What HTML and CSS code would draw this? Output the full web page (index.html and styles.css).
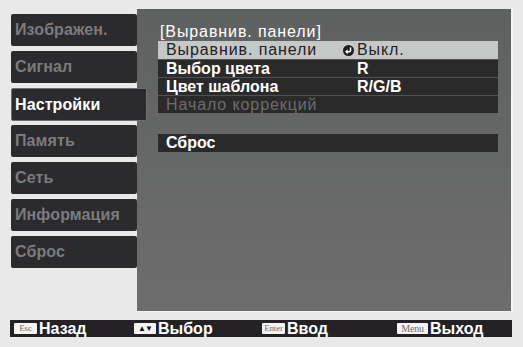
FILE: index.html
```html
<!DOCTYPE html>
<html lang="ru">
<head>
  <meta charset="UTF-8">
  <title>Настройки</title>
  <link rel="stylesheet" href="styles.css">
</head>
<body>
  <div class="screen">
    <div class="top">
      <ul class="tabs">
        <li class="tab">Изображен.</li>
        <li class="tab">Сигнал</li>
        <li class="tab active">Настройки</li>
        <li class="tab">Память</li>
        <li class="tab">Сеть</li>
        <li class="tab">Информация</li>
        <li class="tab">Сброс</li>
      </ul>

      <div class="panel">
        <div class="panel-title">[Выравнив. панели]</div>
        <div class="rows">
          <div class="row selected">
            <span class="label">Выравнив. панели</span>
            <span class="value">
              <svg class="enter-icon" viewBox="0 0 12 12" width="11" height="11">
                <circle cx="6" cy="6" r="6" fill="#1e1e1e"/>
                <path d="M8.2 2.6 V6 Q8.2 7.4 6.8 7.4 H4" fill="none" stroke="#fff" stroke-width="1.7"/>
                <path d="M2.2 7.4 L5.2 4.6 V10.2 Z" fill="#fff"/>
              </svg>Выкл.
            </span>
          </div>
          <div class="row">
            <span class="label">Выбор цвета</span>
            <span class="value">R</span>
          </div>
          <div class="row">
            <span class="label">Цвет шаблона</span>
            <span class="value">R/G/B</span>
          </div>
          <div class="row disabled">
            <span class="label">Начало коррекций</span>
            <span class="value"></span>
          </div>
        </div>
        <div class="rows reset">
          <div class="row">
            <span class="label">Сброс</span>
          </div>
        </div>
      </div>
    </div>

    <div class="help-bar">
      <span class="hint"><span class="key">Esc</span>Назад</span>
      <span class="hint"><span class="key arrows">&#9650;&#9660;</span>Выбор</span>
      <span class="hint"><span class="key">Enter</span>Ввод</span>
      <span class="hint"><span class="key menu">Menu</span>Выход</span>
    </div>
  </div>
</body>
</html>
```

FILE: styles.css
```css
body {
  margin: 0;
  background-color: #e9e9e9;
  font-family: "Liberation Sans", Arial, sans-serif;
}

.screen {
  width: 523px;
  height: 347px;
  padding: 9px 0 0 10px;
  box-sizing: border-box;
  display: flex;
  flex-direction: column;
}

.top {
  display: flex;
}

/* left menu */
.tabs {
  list-style: none;
  margin: 5px 0 0 0;
  padding: 0 0 0 1px;
  width: 126px;
  display: flex;
  flex-direction: column;
  gap: 5px;
}

.tab {
  height: 32px;
  line-height: 32px;
  padding-left: 4px;
  background-color: #2b2a2c;
  border-radius: 2px;
  color: #7b7b7d;
  font-size: 16px;
  font-weight: bold;
  letter-spacing: 0.1px;
  box-sizing: border-box;
}

.tab.active {
  position: relative;
  z-index: 1;
  width: 136px;
  height: 33px;
  margin-bottom: -1px;
  color: #fff;
  border: 1px solid #6e6e70;
  line-height: 31px;
  padding-left: 3px;
}

/* main panel */
.panel {
  width: 376px;
  height: 303px;
  box-sizing: border-box;
  padding: 14px 0 0 21px;
  background: linear-gradient(#5f6161, #6d6d6d);
  border-right: 2px solid #f6f6f6;
  border-bottom: 1px solid #f4f4f4;
}

.panel-title {
  color: #fff;
  font-size: 16px;
  letter-spacing: 0.9px;
  line-height: 18px;
  padding-left: 2px;
}

.rows {
  width: 340px;
}

.reset {
  margin-top: 21px;
}

.row {
  display: flex;
  height: 18px;
  line-height: 17px;
  box-sizing: border-box;
  background-color: #2a2a2b;
  border-top: 1px solid #505152;
  color: #fff;
  font-size: 16px;
  font-weight: bold;
}

.row:first-child {
  border-top: none;
  line-height: 18px;
}

.row .label {
  width: 199px;
  padding-left: 8px;
  box-sizing: border-box;
}

.row .value {
  display: flex;
  align-items: center;
}

.row.selected {
  background-color: #c6c8c8;
  color: #222;
  font-weight: normal;
  letter-spacing: 0.9px;
}

.row.disabled {
  color: #6c6c6e;
  font-weight: normal;
  letter-spacing: 0.9px;
}

.enter-icon {
  margin-left: -14px;
  margin-right: 3px;
}

/* bottom help bar */
.help-bar {
  margin-top: 8px;
  width: 502px;
  height: 17px;
  background-color: #242124;
  display: flex;
  align-items: center;
  color: #fff;
  font-size: 16px;
  font-weight: bold;
}

.hint {
  display: flex;
  align-items: center;
}

.hint:nth-child(1) { width: 120px; padding-left: 4px; }
.hint:nth-child(2) { width: 128px; }
.hint:nth-child(3) { width: 135px; }

.key {
  width: 23px;
  height: 11px;
  line-height: 11px;
  text-align: center;
  background-color: #f4f4f4;
  color: #6f6f6f;
  font-family: "Liberation Serif", serif;
  font-size: 9px;
  font-weight: normal;
  letter-spacing: -0.2px;
  white-space: nowrap;
  margin-right: 2px;
  border-radius: 1px;
}

.key.menu {
  width: 31px;
  font-size: 10px;
}

.key.arrows {
  width: 22px;
  color: #111;
  font-size: 8px;
  letter-spacing: -1px;
}
```
